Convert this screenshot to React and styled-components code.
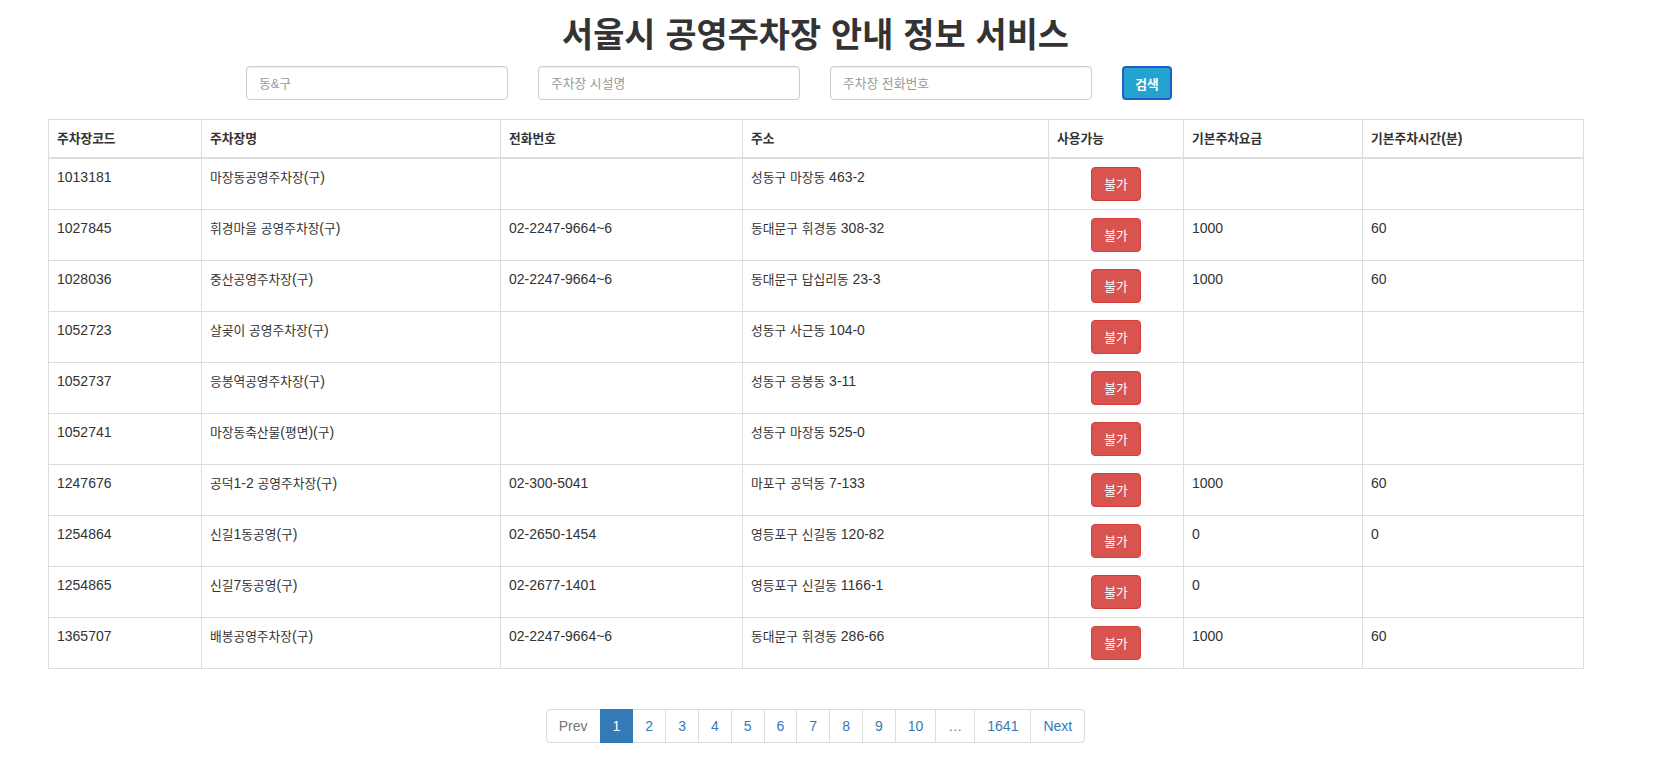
import React from "react";
import styled, { createGlobalStyle } from "styled-components";

const Global = createGlobalStyle`
  html, body { margin: 0; padding: 0; background: #fff; }
  body {
    font-family: "Liberation Sans", "Noto Sans CJK KR", Arial, sans-serif;
    font-size: 14px;
    line-height: 1.42857;
    color: #333;
  }
  * { box-sizing: border-box; }
`;

const Ko = styled.span`
  font-size: ${(p) => p.$scale || 0.91}em;
`;

const HANGUL = /([\uAC00-\uD7A3\u3131-\u318E]+)/;
function T({ children, scale }) {
  if (typeof children !== "string") return children ?? null;
  return children.split(HANGUL).map((part, i) =>
    HANGUL.test(part) ? (
      <Ko key={i} $scale={scale}>
        {part}
      </Ko>
    ) : (
      <React.Fragment key={i}>{part}</React.Fragment>
    )
  );
}

const Container = styled.div`
  width: 1535px;
  margin-left: 48px;
`;

const Title = styled.h1`
  margin: 15px 0 11px;
  font-size: 36px;
  line-height: 40px;
  font-weight: 700;
  text-align: center;
  color: #333;
`;

const SearchForm = styled.form`
  display: flex;
  align-items: center;
  gap: 30px;
  margin: 0 0 19px 198px;
`;

const Input = styled.input`
  width: 262px;
  height: 34px;
  padding: 6px 12px;
  font-family: inherit;
  font-size: 14px;
  color: #555;
  background: #fff;
  border: 1px solid #ccc;
  border-radius: 4px;
  box-shadow: inset 0 1px 1px rgba(0, 0, 0, 0.075);
  outline: none;
  &::placeholder {
    color: #999;
    font-size: 12.8px;
  }
`;

const SearchButton = styled.button`
  width: 50px;
  height: 34px;
  padding: 0;
  font-family: inherit;
  font-size: 14px;
  font-weight: 700;
  color: #fff;
  background: #25a3d0;
  border: 2px solid #1d5ec9;
  border-radius: 4px;
  cursor: pointer;
`;

const Table = styled.table`
  width: 1535px;
  table-layout: fixed;
  border-collapse: collapse;
  border-spacing: 0;
  border: 1px solid #ddd;
  margin: 0;
`;

const Th = styled.th`
  padding: 8px;
  text-align: left;
  font-weight: 700;
  line-height: 20px;
  vertical-align: bottom;
  border: 1px solid #ddd;
  border-bottom-width: 2px;
`;

const Td = styled.td`
  padding: 8px;
  line-height: 20px;
  vertical-align: top;
  border: 1px solid #ddd;
  text-align: ${(p) => (p.$center ? "center" : "left")};
`;

const DangerButton = styled.button`
  display: inline-block;
  width: 50px;
  height: 34px;
  padding: 0;
  font-family: inherit;
  font-size: 14px;
  line-height: 20px;
  color: #fff;
  background: #d9534f;
  border: 1px solid #d43f3a;
  border-radius: 4px;
  vertical-align: middle;
`;

const Pager = styled.nav`
  display: flex;
  justify-content: center;
  margin: 40px 0 20px;
`;

const PageItem = styled.a`
  display: block;
  padding: 6px 12px;
  margin-left: -1px;
  line-height: 20px;
  font-size: 14px;
  text-decoration: none;
  border: 1px solid ${(p) => (p.$active ? "#337ab7" : "#ddd")};
  background: ${(p) => (p.$active ? "#337ab7" : "#fff")};
  color: ${(p) => (p.$active ? "#fff" : p.$muted ? "#777" : "#337ab7")};
  position: relative;
  z-index: ${(p) => (p.$active ? 2 : 0)};
  &:first-child {
    margin-left: 0;
    border-radius: 4px 0 0 4px;
  }
  &:last-child {
    border-radius: 0 4px 4px 0;
  }
`;

const cols = [153, 299, 242, 306, 135, 179, 221];
const headers = [
  "주차장코드",
  "주차장명",
  "전화번호",
  "주소",
  "사용가능",
  "기본주차요금",
  "기본주차시간(분)",
];

const rows = [
  ["1013181", "마장동공영주차장(구)", "", "성동구 마장동 463-2", "", ""],
  ["1027845", "휘경마을 공영주차장(구)", "02-2247-9664~6", "동대문구 휘경동 308-32", "1000", "60"],
  ["1028036", "중산공영주차장(구)", "02-2247-9664~6", "동대문구 답십리동 23-3", "1000", "60"],
  ["1052723", "살곶이 공영주차장(구)", "", "성동구 사근동 104-0", "", ""],
  ["1052737", "응봉역공영주차장(구)", "", "성동구 응봉동 3-11", "", ""],
  ["1052741", "마장동축산물(평면)(구)", "", "성동구 마장동 525-0", "", ""],
  ["1247676", "공덕1-2 공영주차장(구)", "02-300-5041", "마포구 공덕동 7-133", "1000", "60"],
  ["1254864", "신길1동공영(구)", "02-2650-1454", "영등포구 신길동 120-82", "0", "0"],
  ["1254865", "신길7동공영(구)", "02-2677-1401", "영등포구 신길동 1166-1", "0", ""],
  ["1365707", "배봉공영주차장(구)", "02-2247-9664~6", "동대문구 휘경동 286-66", "1000", "60"],
];

const pages = ["1", "2", "3", "4", "5", "6", "7", "8", "9", "10"];

export default function App() {
  return (
    <>
      <Global />
      <Container>
        <Title>
          <T scale={0.94}>서울시 공영주차장 안내 정보 서비스</T>
        </Title>
        <SearchForm onSubmit={(e) => e.preventDefault()}>
          <Input placeholder="동&구" />
          <Input placeholder="주차장 시설명" />
          <Input placeholder="주차장 전화번호" />
          <SearchButton type="submit">
            <T>검색</T>
          </SearchButton>
        </SearchForm>
        <Table>
          <colgroup>
            {cols.map((w, i) => (
              <col key={i} style={{ width: w }} />
            ))}
          </colgroup>
          <thead>
            <tr>
              {headers.map((h) => (
                <Th key={h}>
                  <T>{h}</T>
                </Th>
              ))}
            </tr>
          </thead>
          <tbody>
            {rows.map((r) => (
              <tr key={r[0]}>
                <Td>{r[0]}</Td>
                <Td>
                  <T>{r[1]}</T>
                </Td>
                <Td>{r[2]}</Td>
                <Td>
                  <T>{r[3]}</T>
                </Td>
                <Td $center>
                  <DangerButton>
                    <T>불가</T>
                  </DangerButton>
                </Td>
                <Td>{r[4]}</Td>
                <Td>{r[5]}</Td>
              </tr>
            ))}
          </tbody>
        </Table>
        <Pager>
          <PageItem $muted>Prev</PageItem>
          {pages.map((p) => (
            <PageItem key={p} $active={p === "1"}>
              {p}
            </PageItem>
          ))}
          <PageItem $muted>…</PageItem>
          <PageItem>1641</PageItem>
          <PageItem>Next</PageItem>
        </Pager>
      </Container>
    </>
  );
}
